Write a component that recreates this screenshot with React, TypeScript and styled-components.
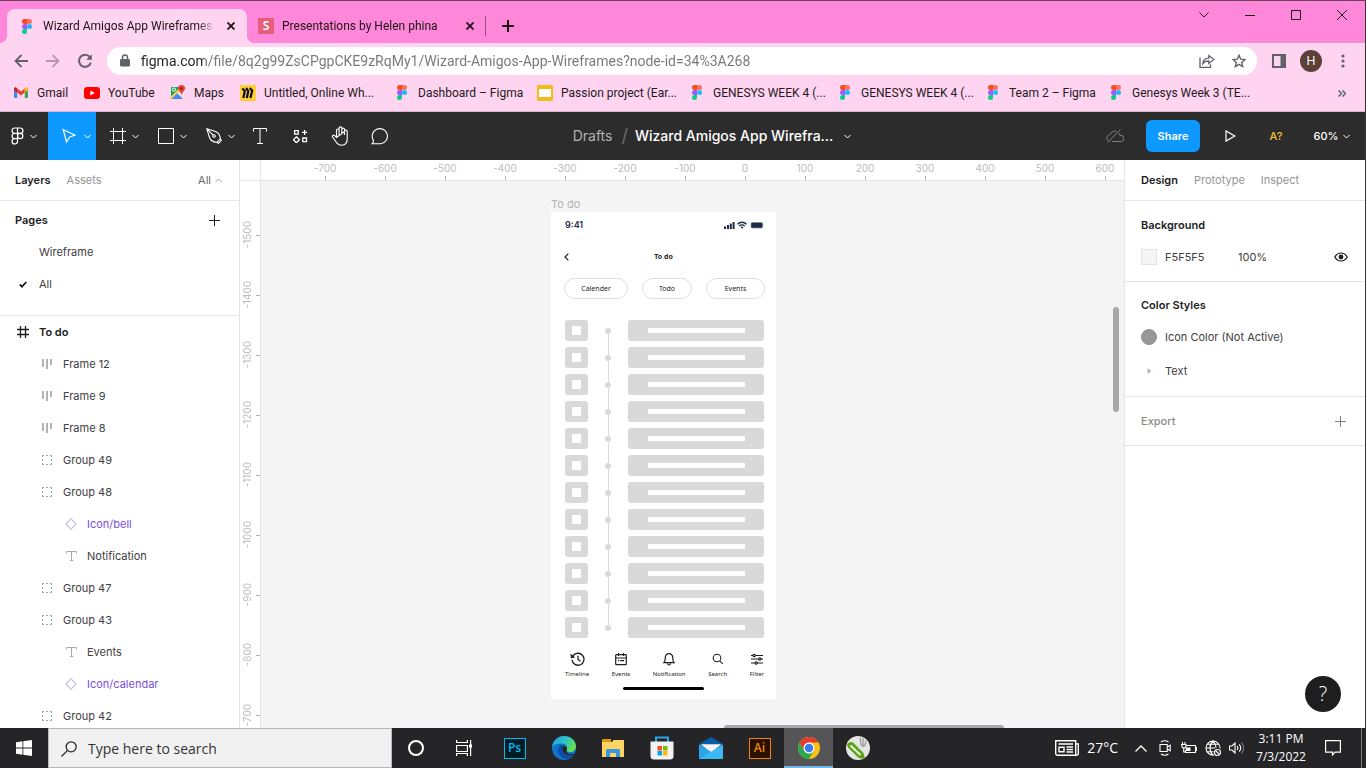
import React from "react";
import styled, { createGlobalStyle, css } from "styled-components";

const ui = `"Open Sans", "Noto Sans", sans-serif`;
const chrome = `Roboto, "Open Sans", sans-serif`;
const inter = `Inter, "Liberation Sans", sans-serif`;
const noto = `"Noto Sans", "Open Sans", sans-serif`;

const GlobalStyle = createGlobalStyle`
  *, *::before, *::after { box-sizing: border-box; }
  body { margin: 0; overflow: hidden; background: #fff; }
  button, input { font: inherit; color: inherit; border: 0; padding: 0; margin: 0; background: none; outline: none; }
  button { cursor: pointer; }
  a { color: inherit; text-decoration: none; }
  svg { display: block; flex: none; }
  h1, h2, ul { margin: 0; padding: 0; font-size: inherit; font-weight: inherit; list-style: none; }
`;

/* ---------- shared ---------- */

const Desktop = styled.div`
  display: flex;
  flex-direction: column;
  height: 100vh;
`;

const BrowserWindow = styled.div`
  flex: 1;
  min-height: 0;
  display: flex;
  flex-direction: column;
  border-top: 1px solid #6d4660;
  border-right: 1px solid #3a3034;
`;

const IconButton = styled.button<{ $w: number; $h?: number }>`
  flex: none;
  display: flex;
  align-items: center;
  justify-content: center;
  width: ${(p) => p.$w}px;
  height: ${(p) => p.$h ?? p.$w}px;
`;

type GlyphProps = {
  w: number;
  h?: number;
  box?: string;
  color?: string;
  sw?: number;
  children: React.ReactNode;
};

const Glyph = ({ w, h = w, box, color = "currentColor", sw = 1, children }: GlyphProps) => (
  <svg width={w} height={h} viewBox={box ?? `0 0 ${w} ${h}`} fill="none" stroke={color} strokeWidth={sw} aria-hidden="true">
    {children}
  </svg>
);

/* ---------- browser chrome ---------- */

const TabStrip = styled.div`
  flex: none;
  display: flex;
  align-items: flex-end;
  height: 42px;
  padding-left: 7px;
  background: #ff87d9;
  font: 12px/16px ${chrome};
  color: #1d1218;
`;

const Tab = styled.div<{ $active?: boolean }>`
  position: relative;
  display: flex;
  align-items: center;
  gap: 8px;
  width: 240px;
  height: 34px;
  padding: ${(p) => (p.$active ? "0 8px 0 12px" : "0 9px 0 11px")};
  ${(p) =>
    p.$active &&
    css`
      background: #ffd4f0;
      border-radius: 8px 8px 0 0;
      &::before,
      &::after {
        content: "";
        position: absolute;
        bottom: 0;
        width: 8px;
        height: 8px;
      }
      &::before {
        left: -8px;
        background: radial-gradient(circle at 0 0, transparent 8px, #ffd4f0 8px);
      }
      &::after {
        right: -8px;
        background: radial-gradient(circle at 100% 0, transparent 8px, #ffd4f0 8px);
      }
    `}
`;

const TabTitle = styled.button`
  flex: 1;
  min-width: 0;
  overflow: hidden;
  white-space: nowrap;
  text-align: left;
  mask-image: linear-gradient(90deg, #000 90%, transparent);
`;

const TabDivider = styled.span`
  width: 1px;
  height: 20px;
  margin: 0 6px 7px -2px;
  background: #9b4f83;
`;

const WindowControls = styled.div`
  display: flex;
  align-self: flex-start;
  margin-left: auto;
`;

const SiteBadge = styled.span`
  width: 16px;
  height: 16px;
  background: #e4607c;
  color: #fff;
  font: 600 12px/16px ${ui};
  text-align: center;
`;

const NavBar = styled.div`
  flex: none;
  display: flex;
  align-items: center;
  height: 36px;
  padding: 0 6px 0 5px;
  background: #ffd4f0;
  color: #5f6368;
`;

const Omnibox = styled.div`
  flex: 1;
  display: flex;
  align-items: center;
  height: 28px;
  margin: 0 6px;
  padding: 0 2px 0 12px;
  border-radius: 14px;
  background: #fff;
`;

const Address = styled.input`
  flex: 1;
  margin-left: 10px;
  height: 24px;
  font: 14px/20px ${chrome};
  color: transparent;
  background: linear-gradient(90deg, #202124 63px, #73767a 63px);
  background-clip: text;
  -webkit-background-clip: text;
`;

const Avatar = styled.span`
  width: 22px;
  height: 22px;
  border-radius: 50%;
  background: #5d4037;
  color: #fff;
  font: 12px/22px ${inter};
  text-align: center;
`;

const Bookmarks = styled.nav`
  flex: none;
  display: flex;
  align-items: center;
  height: 33px;
  padding-left: 13px;
  padding-bottom: 5px;
  border-bottom: 1px solid #d9b4cc;
  background: #ffd4f0;
  font: 12px/16px ${chrome};
  color: #241a20;
`;

const Bookmark = styled.a<{ $w: number }>`
  flex: none;
  display: flex;
  align-items: center;
  gap: 8px;
  width: ${(p) => p.$w}px;
  white-space: nowrap;
`;

const IconSlot = styled.span`
  flex: none;
  display: flex;
  justify-content: center;
  width: 16px;
`;

const FigmaMark = () => (
  <svg width="10" height="15" viewBox="0 0 10 15" aria-hidden="true">
    <path d="M5 0H2.5a2.5 2.5 0 0 0 0 5H5z" fill="#f24e1e" />
    <path d="M5 0h2.5a2.5 2.5 0 0 1 0 5H5z" fill="#ff7262" />
    <path d="M5 5H2.5a2.5 2.5 0 0 0 0 5H5z" fill="#a259ff" />
    <circle cx="7.5" cy="7.5" r="2.5" fill="#1abcfe" />
    <path d="M2.5 10H5v2.5A2.5 2.5 0 1 1 2.5 10z" fill="#0acf83" />
  </svg>
);

const GmailMark = () => (
  <svg width="14" height="11" viewBox="0 0 14 11" aria-hidden="true">
    <path d="M0 2v8a1 1 0 0 0 1 1h2.2V4.4z" fill="#4285f4" />
    <path d="M14 2v8a1 1 0 0 1-1 1h-2.2V4.4z" fill="#34a853" />
    <path d="M3.2 1.4 7 4.2l3.8-2.8v4.2L7 8.4 3.2 5.6z" fill="#ea4335" />
    <path d="M0 1.8C0 .2 1.6-.4 2.8.9l.4.5v4.2L0 3.2z" fill="#c5221f" />
    <path d="M14 1.8C14 .2 12.4-.4 11.2.9l-.4.5v4.2L14 3.2z" fill="#fbbc04" />
  </svg>
);

const YouTubeMark = () => (
  <svg width="16" height="12" viewBox="0 0 16 12" aria-hidden="true">
    <rect width="16" height="12" rx="3" fill="#f00" />
    <path d="M6.3 3.4v5.2L10.8 6z" fill="#fff" />
  </svg>
);

const MapsMark = () => (
  <svg width="16" height="16" viewBox="0 0 16 16" aria-hidden="true">
    <path d="M1 2h12v12H1z" fill="#1ea362" />
    <path d="M1 14 7 8l6 6z" fill="#4a89f3" />
    <path d="M13 2v12L7 8z" fill="#e6e7e8" />
    <path d="M1 13 12 2" stroke="#ffd04b" strokeWidth="2" />
    <circle cx="4" cy="4.6" r="1.6" stroke="#fff" fill="none" />
    <path d="M11.5 0a3.5 3.5 0 0 0-3.5 3.6C8 6 11 7 11.5 10.500 12 7 15 6 15 3.600A3.500 3.500 0 0 0 11.500 0z" fill="#ea4335" />
    <circle cx="11.500" cy="3.500" r="1.200" fill="#7a1d14" />
  </svg>
);

const MiroMark = () => (
  <svg width="16" height="16" viewBox="0 0 16 16" aria-hidden="true">
    <rect width="16" height="16" rx="1" fill="#ffd02f" />
    <path d="M2.300 3.500 4.800 6 3.300 13M6 3l2.300 3-1.500 7M9.700 3l2.500 2.500-1.800 7.500" fill="none" stroke="#0b0a2c" strokeWidth="2.200" />
  </svg>
);

const SlidesMark = () => (
  <svg width="16" height="16" viewBox="0 0 16 16" aria-hidden="true">
    <rect width="16" height="16" rx="1.500" fill="#f5ba15" />
    <rect x="2" y="4" width="12" height="8" fill="#fff" />
  </svg>
);

const bookmarks: { label: string; w: number; mark: React.ReactNode }[] = [
  { label: "Gmail", w: 71, mark: <GmailMark /> },
  { label: "YouTube", w: 86, mark: <YouTubeMark /> },
  { label: "Maps", w: 70, mark: <MapsMark /> },
  { label: "Untitled, Online Wh...", w: 154, mark: <MiroMark /> },
  { label: "Dashboard – Figma", w: 143, mark: <FigmaMark /> },
  { label: "Passion project (Ear...", w: 152, mark: <SlidesMark /> },
  { label: "GENESYS WEEK 4 (...", w: 148, mark: <FigmaMark /> },
  { label: "GENESYS WEEK 4 (...", w: 148, mark: <FigmaMark /> },
  { label: "Team 2 – Figma", w: 123, mark: <FigmaMark /> },
  { label: "Genesys Week 3 (TE...", w: 140, mark: <FigmaMark /> },
];

const CloseX = () => (
  <Glyph w={8} sw={1.8} color="#1d1218">
    <path d="M.5.5l7 7M7.500.5l-7 7" />
  </Glyph>
);

const BrowserChrome = () => (
  <>
    <TabStrip>
      <Tab $active>
        <IconSlot><FigmaMark /></IconSlot>
        <TabTitle>Wizard Amigos App Wireframes -</TabTitle>
        <IconButton $w={16} aria-label="Close tab"><CloseX /></IconButton>
      </Tab>
      <Tab>
        <SiteBadge>S</SiteBadge>
        <TabTitle>Presentations by Helen phina</TabTitle>
        <IconButton $w={16} aria-label="Close tab"><CloseX /></IconButton>
      </Tab>
      <TabDivider />
      <IconButton $w={32} $h={34} aria-label="New tab">
        <Glyph w={12} sw={2} color="#1d1218"><path d="M6 0v12M0 6h12" /></Glyph>
      </IconButton>
      <WindowControls>
        <IconButton $w={46} $h={28} aria-label="Search tabs"><Glyph w={10} h={6}><path d="M.5.5 5 5 9.500.5" /></Glyph></IconButton>
        <IconButton $w={46} $h={28} aria-label="Minimize"><Glyph w={10}><path d="M0 5.500h10" /></Glyph></IconButton>
        <IconButton $w={46} $h={28} aria-label="Maximize"><Glyph w={10}><path d="M.5.5h9v9h-9z" /></Glyph></IconButton>
        <IconButton $w={46} $h={28} aria-label="Close window"><Glyph w={10}><path d="M0 0l10 10M10 0 0 10" /></Glyph></IconButton>
      </WindowControls>
    </TabStrip>
    <NavBar>
      <IconButton $w={32} aria-label="Back"><Glyph w={14} sw={1.8}><path d="M14 7H1.500M7.500 1l-6 6 6 6" /></Glyph></IconButton>
      <IconButton $w={32} aria-label="Forward"><Glyph w={14} sw={1.8} color="#b998ad"><path d="M0 7h12.500M6.500 1l6 6-6 6" /></Glyph></IconButton>
      <IconButton $w={32} aria-label="Reload">
        <Glyph w={14} sw={2}><path d="M12 3.400A6 6 0 1 0 12.800 8.600" /><path d="M13.800.2v5.600H8.200z" fill="currentColor" stroke="none" /></Glyph>
      </IconButton>
      <Omnibox>
        <Glyph w={12} h={14}><path d="M2 5.500h8a.5.5 0 0 1 .5.5v5.500a.5.5 0 0 1-.5.5H2a.5.5 0 0 1-.5-.5V6a.5.5 0 0 1 .5-.5z" fill="currentColor" /><path d="M3.500 5.500V3.400a2.500 2.500 0 0 1 5 0v2.100" strokeWidth="1.500" /></Glyph>
        <Address aria-label="Address" defaultValue="figma.com/file/8q2g99ZsCPgpCKE9zRqMy1/Wizard-Amigos-App-Wireframes?node-id=34%3A268" />
        <IconButton $w={32} $h={28} aria-label="Share this page">
          <Glyph w={16} h={14} sw={1.3}><path d="M1 3.500v9.800h10.500v-3" /><path d="M3.800 9.500c.4-3.500 2.600-5.200 6-5.300V1.500l5 4-5 4V7c-2.600 0-4.600.6-6 2.500z" /></Glyph>
        </IconButton>
        <IconButton $w={32} $h={28} aria-label="Bookmark this page">
          <Glyph w={14} sw={1.4}><path d="M7 1.300l1.700 3.900 4.200.4-3.200 2.800.95 4.100L7 10.300l-3.650 2.200.95-4.100L1.100 5.600l4.200-.4z" /></Glyph>
        </IconButton>
      </Omnibox>
      <IconButton $w={32} aria-label="Side panel"><Glyph w={14} sw={2}><path d="M1 1h12v12H1z" /><path d="M9.500 1H13v12H9.500z" fill="currentColor" /></Glyph></IconButton>
      <IconButton $w={32} aria-label="Profile"><Avatar>H</Avatar></IconButton>
      <IconButton $w={32} aria-label="Browser menu"><Glyph w={4} h={14}><g fill="currentColor" stroke="none"><circle cx="2" cy="2" r="1.600" /><circle cx="2" cy="7" r="1.600" /><circle cx="2" cy="12" r="1.600" /></g></Glyph></IconButton>
    </NavBar>
    <Bookmarks>
      {bookmarks.map((b, i) => (
        <Bookmark key={i} href="#" $w={b.w}><IconSlot>{b.mark}</IconSlot>{b.label}</Bookmark>
      ))}
      <WindowControls as="span">
        <IconButton $w={46} $h={28} aria-label="More bookmarks"><Glyph w={8} h={7} sw={1.500} color="#5f6368"><path d="M.5.5l3 3-3 3M4.500.5l3 3-3 3" /></Glyph></IconButton>
      </WindowControls>
    </Bookmarks>
  </>
);

/* ---------- editor toolbar ---------- */

const ToolBar = styled.header`
  flex: none;
  display: flex;
  align-items: center;
  height: 48px;
  background: #2c2c2c;
  color: #fff;
  font: 11px/16px ${inter};
`;

const Tool = styled.button<{ $active?: boolean; $plain?: boolean; $shift?: boolean }>`
  flex: none;
  display: flex;
  align-items: center;
  justify-content: center;
  gap: ${(p) => (p.$active ? 8 : 6)}px;
  width: ${(p) => (p.$plain ? 40 : 48)}px;
  height: 48px;
  padding-left: ${(p) => (p.$shift ? 8 : 0)}px;
  background: ${(p) => (p.$active ? "#0d99ff" : "transparent")};
`;

const FileTitle = styled.div`
  flex: 1;
  display: flex;
  align-items: center;
  justify-content: center;
  padding-right: 74px;
  font-size: 14px;
  white-space: nowrap;
`;

const Muted = styled.span`
  color: #b3b3b3;
`;

const Slash = styled.span`
  padding: 0 7px 0 9px;
  font-size: 18px;
  color: #6e6e6e;
`;

const FileName = styled.h1`
  font-weight: 500;
  margin-right: 10px;
`;

const ShareButton = styled.button`
  width: 54px;
  height: 32px;
  margin: 0 7px 0 15px;
  border-radius: 6px;
  background: #0d99ff;
  font-weight: 600;
`;

const ToolText = styled.button<{ $color?: string; $w: number }>`
  display: flex;
  align-items: center;
  justify-content: center;
  gap: 5px;
  width: ${(p) => p.$w}px;
  height: 48px;
  color: ${(p) => p.$color ?? "#fff"};
  font-weight: 500;
`;

const Caret = ({ up = false, color = "currentColor" }: { up?: boolean; color?: string }) => (
  <Glyph w={7} h={5} color={color}><path d={up ? "M.5 4l3-3 3 3" : "M.5 1l3 3 3-3"} /></Glyph>
);

const EditorToolbar = () => (
  <ToolBar>
    <Tool aria-label="Main menu">
      <Glyph w={13} h={18} sw={1.2}><path d="M6.500 1H3.700a2.600 2.600 0 0 0 0 5.300h2.800zM6.500 1h2.800a2.600 2.600 0 0 1 0 5.300H6.500zM6.500 6.300H3.700a2.600 2.600 0 0 0 0 5.300h2.800zM3.700 11.600h2.800v2.700a2.700 2.700 0 1 1-2.800-2.700z" /><circle cx="9.200" cy="8.950" r="2.650" /></Glyph>
      <Caret />
    </Tool>
    <Tool $active $shift aria-label="Move"><Glyph w={14} h={16} sw={1.2}><path d="M1.200 1.500 4.500 14l3.100-5 5.400-1.700z" /></Glyph><Caret /></Tool>
    <Tool $shift aria-label="Frame"><Glyph w={16}><path d="M3.500 0v16M12.500 0v16M0 3.500h16M0 12.500h16" /></Glyph><Caret /></Tool>
    <Tool $shift aria-label="Rectangle"><Glyph w={16}><path d="M.5.5h15v15H.5z" /></Glyph><Caret /></Tool>
    <Tool $shift aria-label="Pen">
      <Glyph w={16} sw={1.1}><path d="M.8.8l8.700 2.700c3 1 4.500 3.500 5 7.500l.8 1.500-2.800 2.800-1.500-.8c-4-.5-6.500-2-7.500-5zM.8.8l6.400 6.400M11 14.200l3.500-3.400" /><circle cx="8" cy="8" r="1.300" /></Glyph>
      <Caret />
    </Tool>
    <Tool $plain aria-label="Text"><Glyph w={14} h={16}><path d="M.5 3.500V.5h13v3M7 .5v15M4 15.500h6" /></Glyph></Tool>
    <Tool $plain aria-label="Resources"><Glyph w={15} h={14} sw={1.3}><path d="M1.600 1.600h3.600v3.600H1.600zM11.600.9v5M9.100 3.400h5M9.800 9h3.700v3.700H9.800zM3.400 7.800l3 3-3 3-3-3z" /></Glyph></Tool>
    <Tool $plain aria-label="Hand">
      <Glyph w={18} h={20} sw={1.1}><path d="M5.500 10.500V4.300a1.300 1.300 0 0 1 2.600 0V9M8.100 8.500V2.200a1.300 1.300 0 0 1 2.700 0v6.300M10.800 3.500a1.300 1.300 0 0 1 2.700 0V9M13.500 5.500a1.300 1.300 0 0 1 2.700 0V13c0 4-2.200 6.200-5.600 6.200-2.600 0-4.200-1-5.500-3.200L1.500 11c-.7-1.200 1-2.500 2.200-1.400l1.800 1.900z" /></Glyph>
    </Tool>
    <Tool $plain aria-label="Comment"><Glyph w={18} h={17} sw={1.1}><path d="M1 15.800c1-.9 1.500-2 1.500-3.300A7.600 7.600 0 1 1 9.700 15.800z" /></Glyph></Tool>
    <FileTitle>
      <Muted>Drafts</Muted>
      <Slash>/</Slash>
      <FileName>Wizard Amigos App Wirefra...</FileName>
      <IconButton $w={9} $h={24} aria-label="File options"><Caret /></IconButton>
    </FileTitle>
    <IconButton $w={32} aria-label="Offline status">
      <Glyph w={18} h={14} color="#808080"><path d="M10.500 2.300A5 5 0 0 0 4.200 5.500 3.500 3.500 0 0 0 2 11.500M13 4l1 2.500a3 3 0 0 1 1.500 6H5.500M14.500.5l-13 13" /></Glyph>
    </IconButton>
    <ShareButton>Share</ShareButton>
    <IconButton $w={46} $h={48} aria-label="Present"><Glyph w={11} h={12} sw={1.2}><path d="M1 .9v10.200L9.800 6z" /></Glyph></IconButton>
    <ToolText $w={46} $color="#f2c530">A?</ToolText>
    <ToolText $w={66}>60% <Caret /></ToolText>
  </ToolBar>
);

/* ---------- workspace ---------- */

const Workspace = styled.main`
  flex: 1;
  min-height: 0;
  display: flex;
  font: 11px/16px ${inter};
  color: #404040;
`;

const LeftPanel = styled.aside`
  flex: none;
  width: 240px;
  overflow: hidden;
  border-right: 1px solid #e5e5e5;
  background: #fff;
`;

const PanelTabs = styled.div`
  display: flex;
  align-items: center;
  gap: 16px;
  height: 41px;
  padding: 0 17px 0 15px;
  border-bottom: 1px solid #e5e5e5;
`;

const PanelTab = styled.button<{ $active?: boolean }>`
  display: flex;
  align-items: center;
  gap: 4px;
  color: ${(p) => (p.$active ? "#1e1e1e" : "#949494")};
  font-weight: ${(p) => (p.$active ? 600 : 400)};
`;

const FilterTab = styled(PanelTab)`
  margin-left: auto;
  color: #666;
`;

const PagesSection = styled.section`
  padding: 3px 0 15px;
  border-bottom: 1px solid #e5e5e5;
`;

const PanelHeader = styled.div<{ $muted?: boolean }>`
  display: flex;
  align-items: center;
  justify-content: space-between;
  height: 32px;
  padding: 0 17px 0 15px;
  color: ${(p) => (p.$muted ? "#8c8c8c" : "#1e1e1e")};
  font-weight: ${(p) => (p.$muted ? 500 : 600)};
`;

const Row = styled.button<{ $depth: number; $kind?: string }>`
  display: flex;
  align-items: center;
  gap: 10px;
  width: 100%;
  height: 32px;
  padding-left: ${(p) => 17 + p.$depth * 24}px;
  text-align: left;
  color: ${(p) => (p.$kind === "component" ? "#7b4fe0" : p.$kind === "frame" ? "#1e1e1e" : "inherit")};
  font-weight: ${(p) => (p.$kind === "frame" ? 600 : 400)};
`;

const RowIcon = styled.span`
  flex: none;
  display: flex;
  justify-content: center;
  width: 12px;
`;

type Kind = "frame" | "auto" | "group" | "component" | "text";

const kindIcons: Record<Kind, React.ReactNode> = {
  frame: <Glyph w={12} sw={1.3} color="#1e1e1e"><path d="M3.500 0v12M8.500 0v12M0 3.500h12M0 8.500h12" /></Glyph>,
  auto: <Glyph w={10} sw={2} color="#b3b3b3"><path d="M1 0v8M5 0v10M9 0v6" /></Glyph>,
  group: <Glyph w={10} color="#a0a0a0"><path d="M.5 2V.5H2M4 .5h2M8 .5h1.500V2M9.500 4v2M9.500 8v1.500H8M6 9.500H4M2 9.500H.5V8M.5 6V4" /></Glyph>,
  component: <Glyph w={12} sw={1.2} color="#cdbfe6"><path d="M6 .8 11.200 6 6 11.200.8 6z" /></Glyph>,
  text: <Glyph w={11} h={10} color="#a8a8a8"><path d="M.5 2.500v-2h10v2M5.500.5v9M4 9.500h3" /></Glyph>,
};

const layers: { name: string; kind: Kind; depth: number }[] = [
  { name: "To do", kind: "frame", depth: 0 },
  { name: "Frame 12", kind: "auto", depth: 1 },
  { name: "Frame 9", kind: "auto", depth: 1 },
  { name: "Frame 8", kind: "auto", depth: 1 },
  { name: "Group 49", kind: "group", depth: 1 },
  { name: "Group 48", kind: "group", depth: 1 },
  { name: "Icon/bell", kind: "component", depth: 2 },
  { name: "Notification", kind: "text", depth: 2 },
  { name: "Group 47", kind: "group", depth: 1 },
  { name: "Group 43", kind: "group", depth: 1 },
  { name: "Events", kind: "text", depth: 2 },
  { name: "Icon/calendar", kind: "component", depth: 2 },
  { name: "Group 42", kind: "group", depth: 1 },
];

const Plus = ({ color = "#1e1e1e" }: { color?: string }) => (
  <Glyph w={11} color={color}><path d="M5.500 0v11M0 5.500h11" /></Glyph>
);

const LayersPanel = () => (
  <LeftPanel>
    <PanelTabs>
      <PanelTab $active>Layers</PanelTab>
      <PanelTab>Assets</PanelTab>
      <FilterTab>All <Caret up color="#999" /></FilterTab>
    </PanelTabs>
    <PagesSection>
      <PanelHeader>
        <h2>Pages</h2>
        <IconButton $w={16} aria-label="Add page"><Plus /></IconButton>
      </PanelHeader>
      <Row $depth={0}><RowIcon />Wireframe</Row>
      <Row $depth={0}>
        <RowIcon><Glyph w={8} h={7} sw={1.800} color="#1e1e1e"><path d="M.8 3.500 3 5.600 7.300 1" /></Glyph></RowIcon>
        All
      </Row>
    </PagesSection>
    <ul>
      {layers.map((l) => (
        <li key={l.name}>
          <Row $depth={l.depth} $kind={l.kind}><RowIcon>{kindIcons[l.kind]}</RowIcon>{l.name}</Row>
        </li>
      ))}
    </ul>
  </LeftPanel>
);

const Stage = styled.section`
  flex: 1;
  min-width: 0;
  display: grid;
  grid-template: 21px 1fr / 21px 1fr;
  overflow: hidden;
  background: #fff;
`;

const Corner = styled.div`
  border-right: 1px solid #e5e5e5;
  border-bottom: 1px solid #e5e5e5;
`;

const RulerX = styled.div`
  display: flex;
  overflow: hidden;
  padding-left: 34px;
  border-bottom: 1px solid #e5e5e5;
  font-size: 10px;
  color: #bcbcbc;
`;

const RulerY = styled.div`
  display: flex;
  flex-direction: column;
  overflow: hidden;
  padding-top: 24px;
  border-right: 1px solid #e5e5e5;
  font-size: 10px;
  color: #bcbcbc;
`;

const MarkX = styled.span`
  flex: none;
  width: 60px;
  text-align: center;
  background: linear-gradient(#b3b3b3, #b3b3b3) 30px 16px / 1px 4px no-repeat;
`;

const MarkY = styled.span`
  flex: none;
  height: 60px;
  width: 20px;
  display: flex;
  justify-content: center;
  align-items: center;
  padding-right: 6px;
  background: linear-gradient(#b3b3b3, #b3b3b3) 16px 30px / 4px 1px no-repeat;
  span {
    writing-mode: vertical-rl;
    transform: rotate(180deg);
  }
`;

const Board = styled.div`
  position: relative;
  overflow: hidden;
  background: #f4f4f4;
`;

const ScrollThumb = styled.span<{ $axis: "x" | "y" }>`
  position: absolute;
  border-radius: 3px;
  background: #a8a8a8;
  ${(p) =>
    p.$axis === "y"
      ? css`right: 5px; top: 126px; width: 6px; height: 105px;`
      : css`right: 120px; bottom: -3px; width: 280px; height: 6px;`}
`;

const Artboard = styled.div`
  position: absolute;
  left: 290px;
  top: 15px;
  width: 225px;
`;

const ArtboardName = styled.div`
  height: 16px;
  color: #b3b3b3;
`;

const Phone = styled.div`
  display: flex;
  flex-direction: column;
  height: 487px;
  background: #fff;
  font: 7px/12px ${noto};
  color: #1e1e1e;
`;

const StatusBar = styled.div`
  display: flex;
  align-items: center;
  justify-content: space-between;
  height: 25px;
  padding: 0 11px 0 14px;
  font: 600 9px/12px ${inter};
  color: #1c2b46;
`;

const PhoneHeader = styled.div`
  display: grid;
  grid-template-columns: 1fr auto 1fr;
  align-items: center;
  height: 39px;
  padding: 0 13px;
  font-weight: 700;
`;

const Pills = styled.div`
  display: flex;
  justify-content: space-between;
  padding: 2px 11px 0 13px;
`;

const Pill = styled.button<{ $w: number }>`
  width: ${(p) => p.$w}px;
  height: 21px;
  border: 1px solid #dedede;
  border-radius: 11px;
`;

const TodoList = styled.ul`
  display: flex;
  flex-direction: column;
  gap: 6px;
  padding: 21px 12px 0 14px;
`;

const TodoItem = styled.li`
  position: relative;
  display: grid;
  grid-template-columns: 23px 40px 1fr;
  align-items: center;
  height: 21px;
  &:not(:last-child)::after {
    content: "";
    position: absolute;
    left: 43px;
    top: 11px;
    width: 1px;
    height: 27px;
    background: #dcdcdc;
  }
`;

const Block = styled.span`
  display: flex;
  align-items: center;
  justify-content: center;
  height: 21px;
  border-radius: 3px;
  background: #d9d9d9;
`;

const Cutout = styled.span<{ $w: number; $h: number }>`
  width: ${(p) => p.$w}px;
  height: ${(p) => p.$h}px;
  background: #fff;
`;

const Dot = styled.span`
  justify-self: center;
  width: 6px;
  height: 6px;
  border-radius: 50%;
  background: #d9d9d9;
`;

const PhoneNav = styled.nav`
  display: flex;
  justify-content: space-between;
  padding: 14px 12px 0 14px;
`;

const PhoneNavItem = styled.button`
  display: flex;
  flex-direction: column;
  align-items: center;
  gap: 2px;
  font-size: 6px;
  line-height: 12px;
`;

const HomeBar = styled.span`
  align-self: center;
  width: 81px;
  height: 3px;
  margin-top: 7px;
  border-radius: 2px;
  background: #000;
`;

const navItems: { label: string; icon: React.ReactNode }[] = [
  { label: "Timeline", icon: <Glyph w={15} h={14} sw={1.3}><path d="M2.800 4.200A6 6 0 1 1 2 7.800M8 3.700V7.500l2.600 1.700" /><path d="M.3 1.500 1 6.200l4.300-.8z" fill="currentColor" stroke="none" /></Glyph> },
  { label: "Events", icon: <Glyph w={12} h={14} sw={1.2}><path d="M1.500 2.600h9a.8.8 0 0 1 .8.8v8.500a.8.8 0 0 1-.8.8h-9a.8.8 0 0 1-.8-.8V3.400a.8.8 0 0 1 .8-.8zM.7 6h10.600M3.500 1v3M8.500 1v3M3 8.700h1.200M5.200 8.700H9" /></Glyph> },
  { label: "Notification", icon: <Glyph w={12} h={14} sw={1.2}><path d="M.8 10.700h10.400c-1.200-1.200-1.500-2.200-1.500-5A3.700 3.700 0 0 0 6 1.700a3.700 3.700 0 0 0-3.700 4c0 2.800-.3 3.800-1.500 5zM4.500 11.500c.2 2 2.800 2 3 0" /></Glyph> },
  { label: "Search", icon: <Glyph w={12} h={14} sw={1.1}><circle cx="5" cy="6" r="3.800" /><path d="M7.800 8.800l3 3" /></Glyph> },
  { label: "Filter", icon: <Glyph w={12} h={14} sw={1.2}><path d="M0 3.500h2M4.500 3.500H12M0 7h7.500M10 7h2M0 11h4M6.500 11H12" /><circle cx="3.200" cy="3.500" r="1.200" /><circle cx="8.800" cy="7" r="1.200" /><circle cx="5.300" cy="11" r="1.200" /></Glyph> },
];

const Canvas = () => (
  <Stage>
    <Corner />
    <RulerX>
      {[-700, -600, -500, -400, -300, -200, -100, 0, 100, 200, 300, 400, 500, 600].map((n) => (
        <MarkX key={n}>{n}</MarkX>
      ))}
    </RulerX>
    <RulerY>
      {[-1500, -1400, -1300, -1200, -1100, -1000, -900, -800, -700].map((n) => (
        <MarkY key={n}><span>{n}</span></MarkY>
      ))}
    </RulerY>
    <Board>
      <Artboard>
        <ArtboardName>To do</ArtboardName>
        <Phone>
          <StatusBar>
            9:41
            <svg width="41" height="8" viewBox="0 0 41 8" fill="#1c2b46" aria-hidden="true">
              <path d="M0 5.500h2V8H0zM3 4h2v4H3zM5.800 2.500h2V8h-2zM8.600 1h2v7h-2z" />
              <path d="M13.500 3.300a6 6 0 0 1 9 0M15.300 5a3.700 3.700 0 0 1 5.400 0" fill="none" stroke="#1c2b46" strokeWidth="1.300" />
              <path d="M16.600 6.200a2 2 0 0 1 2.800 0L18 7.800z" />
              <rect x="26.500" y="1" width="12.500" height="6.500" rx="1.800" fill="#a4aab5" />
              <rect x="27.300" y="1.800" width="11" height="5" rx="1" />
              <path d="M39.600 3.200v2.200c.8-.4.800-1.800 0-2.200z" fill="#a4aab5" />
            </svg>
          </StatusBar>
          <PhoneHeader>
            <IconButton $w={5} $h={12} aria-label="Back"><Glyph w={5} h={8} sw={1.2}><path d="M4.300.6 1 4l3.300 3.400" /></Glyph></IconButton>
            <span>To do</span>
            <span />
          </PhoneHeader>
          <Pills>
            <Pill $w={64}>Calender</Pill>
            <Pill $w={50}>Todo</Pill>
            <Pill $w={59}>Events</Pill>
          </Pills>
          <TodoList>
            {Array.from({ length: 12 }, (_, i) => (
              <TodoItem key={i}>
                <Block><Cutout $w={9} $h={9} /></Block>
                <Dot />
                <Block><Cutout $w={97} $h={5} /></Block>
              </TodoItem>
            ))}
          </TodoList>
          <PhoneNav>
            {navItems.map((n) => (
              <PhoneNavItem key={n.label}>{n.icon}{n.label}</PhoneNavItem>
            ))}
          </PhoneNav>
          <HomeBar />
        </Phone>
      </Artboard>
      <ScrollThumb $axis="y" />
      <ScrollThumb $axis="x" />
    </Board>
  </Stage>
);

const RightPanel = styled.aside`
  position: relative;
  flex: none;
  width: 241px;
  border-left: 1px solid #e5e5e5;
  background: #fff;
  ${PanelTabs}, ${PanelHeader} {
    padding-left: 16px;
  }
`;

const PropSection = styled.section<{ $pad?: string }>`
  padding: ${(p) => p.$pad ?? "8px 0"};
  border-bottom: 1px solid #e5e5e5;
`;

const PropRow = styled.div`
  display: flex;
  align-items: center;
  gap: 8px;
  height: 32px;
  padding: 0 16px;
  & + & {
    margin-top: 2px;
  }
`;

const Swatch = styled.span<{ $round?: boolean }>`
  width: 16px;
  height: 16px;
  border: 1px solid ${(p) => (p.$round ? "#8f8f8f" : "#e2e2e2")};
  border-radius: ${(p) => (p.$round ? "50%" : "0")};
  background: ${(p) => (p.$round ? "#979797" : "#f5f5f5")};
`;

const Field = styled.input<{ $w: number }>`
  width: ${(p) => p.$w}px;
`;

const EndButton = styled(IconButton)`
  margin-left: auto;
`;

const HelpButton = styled.button`
  position: absolute;
  right: 24px;
  bottom: 16px;
  width: 36px;
  height: 36px;
  border-radius: 50%;
  background: #1e1e1e;
  color: #fff;
  font: 300 20px/36px ${ui};
`;

const DesignPanel = () => (
  <RightPanel>
    <PanelTabs>
      <PanelTab $active>Design</PanelTab>
      <PanelTab>Prototype</PanelTab>
      <PanelTab>Inspect</PanelTab>
    </PanelTabs>
    <PropSection>
      <PanelHeader><h2>Background</h2></PanelHeader>
      <PropRow>
        <Swatch />
        <Field $w={65} aria-label="Background color" defaultValue="F5F5F5" />
        <Field $w={40} aria-label="Background opacity" defaultValue="100%" />
        <EndButton $w={16} aria-label="Toggle visibility">
          <Glyph w={14} h={10} sw={1.2} color="#1e1e1e"><path d="M.8 5C2.300 2.300 4.400 1 7 1s4.700 1.300 6.200 4C11.700 7.700 9.600 9 7 9S2.300 7.700.8 5z" /><circle cx="7" cy="5" r="1.800" fill="#1e1e1e" /></Glyph>
        </EndButton>
      </PropRow>
    </PropSection>
    <PropSection $pad="7px 0 9px">
      <PanelHeader><h2>Color Styles</h2></PanelHeader>
      <PropRow><Swatch $round />Icon Color (Not Active)</PropRow>
      <PropRow as="button">
        <IconSlot><svg width="5" height="6" viewBox="0 0 5 6" aria-hidden="true"><path d="M.5 0v6l4-3z" fill="#b3b3b3" /></svg></IconSlot>
        Text
      </PropRow>
    </PropSection>
    <PropSection>
      <PanelHeader $muted>
        <h2>Export</h2>
        <IconButton $w={16} aria-label="Add export"><Plus color="#808080" /></IconButton>
      </PanelHeader>
    </PropSection>
    <HelpButton aria-label="Help">?</HelpButton>
  </RightPanel>
);

/* ---------- taskbar ---------- */

const Bar = styled.footer`
  flex: none;
  display: flex;
  height: 40px;
  background: #252527;
  color: #fff;
  font: 12px/18px ${ui};
`;

const SearchBox = styled.label`
  display: flex;
  align-items: center;
  gap: 11px;
  width: 344px;
  padding: 1px 12px 0;
  border: 1px solid #b9b9b9;
  background: #f1f1f1;
  color: #2a2a2a;
  input {
    flex: 1;
    font-size: 14px;
  }
  input::placeholder {
    color: #333;
    opacity: 1;
  }
`;

const Apps = styled.div`
  display: flex;
  margin-left: 2px;
`;

const AppButton = styled(IconButton)<{ $active?: boolean }>`
  background: ${(p) => (p.$active ? "#555557" : "transparent")};
  box-shadow: ${(p) => (p.$active ? "inset 0 -2px #76b9ed" : "none")};
`;

const Tray = styled.div`
  display: flex;
  margin-left: auto;
`;

const Weather = styled.button`
  display: flex;
  align-items: center;
  gap: 8px;
  margin-right: 11px;
  font-size: 14px;
`;

const Clock = styled.button`
  width: 64px;
  text-align: center;
`;

const ShowDesktop = styled.span`
  width: 5px;
  border-left: 1px solid #777;
  margin-left: 8px;
`;

const Adobe = styled.span<{ $line: string; $bg: string }>`
  width: 22px;
  height: 21px;
  border: 1px solid ${(p) => p.$line};
  background: ${(p) => p.$bg};
  color: ${(p) => p.$line};
  font: 600 12px/18px ${ui};
  text-align: center;
`;

const apps: { name: string; active?: boolean; icon: React.ReactNode }[] = [
  { name: "Photoshop", icon: <Adobe $line="#00b8f0" $bg="#001d26">Ps</Adobe> },
  {
    name: "Edge",
    icon: (
      <svg width="24" height="24" viewBox="0 0 24 24" aria-hidden="true">
        <defs>
          <linearGradient id="edgeTop" x1="0" y1="0" x2="1" y2=".5"><stop offset="0" stopColor="#1f9de0" /><stop offset=".6" stopColor="#2fc6c0" /><stop offset="1" stopColor="#66e04e" /></linearGradient>
        </defs>
        <circle cx="12" cy="12" r="12" fill="#1273cc" />
        <path d="M0 11C.8 4.500 6 0 12 0c7 0 12 5 12 10.500 0 3.500-2.800 5.500-5.800 5.500-2.700 0-4.200-1-3.600-2 1.800-3-.6-6.500-5-6.500C5 7.500 1.200 9 0 11z" fill="url(#edgeTop)" />
        <path d="M9 9c-3.500 2-4 7-1 10.500S16 23.500 19 21.800c1.600-.9 2.800-2.300 3.300-3.300-3 1.500-7.500 1.500-10-.8C9.600 15.300 9.300 12 11 9.800z" fill="#0c4da2" />
        <path d="M11 10c-1.400 2.500-.8 5.600 1.500 7.500 2.500 2 6.500 2.300 9.800.9.500-.2.300-.9-.3-.7-2.500.8-7 .5-7.500-2-.2-.9.500-1.200.5-2.700 0-2.500-3-4-4-3z" fill="#252527" />
      </svg>
    ),
  },
  {
    name: "File Explorer",
    icon: (
      <svg width="22" height="18" viewBox="0 0 22 18" aria-hidden="true">
        <path d="M0 1a1 1 0 0 1 1-1h8v4H0z" fill="#e09b12" />
        <path d="M0 3h10l1.500-2H22v17H0z" fill="#ffd465" />
        <path d="M4 18v-6.500a1.500 1.500 0 0 1 1.500-1.500h11a1.500 1.500 0 0 1 1.500 1.500V18h-4v-4H8v4z" fill="#3a96dd" />
      </svg>
    ),
  },
  {
    name: "Microsoft Store",
    icon: (
      <svg width="24" height="24" viewBox="0 0 24 24" aria-hidden="true">
        <path d="M6 6V1.500h12V6" fill="none" stroke="#29a9e8" strokeWidth="2" />
        <path d="M.5 5.500h23V20a3.500 3.500 0 0 1-3.500 3.500H4A3.500 3.500 0 0 1 .5 20z" fill="#f2f2f2" />
        <path d="M7.500 10H12v4.500H7.500z" fill="#f25022" /><path d="M13 10h4.500v4.500H13z" fill="#7fba00" />
        <path d="M7.500 15H12v4.500H7.500z" fill="#00a4ef" /><path d="M13 15h4.500v4.500H13z" fill="#ffb900" />
      </svg>
    ),
  },
  {
    name: "Mail",
    icon: (
      <svg width="24" height="22" viewBox="0 0 24 22" aria-hidden="true">
        <path d="M0 7 12 0l12 7v3H0z" fill="#0b5aa8" />
        <path d="M2 7.500h20L12 16z" fill="#f3f3f3" />
        <path d="M0 7.500 24 22H0z" fill="#2aa4ea" /><path d="M24 7.500V22L0 22z" fill="#3cb9f5" />
        <path d="M2 7.500h20l-10 6.800z" fill="#f3f3f3" />
      </svg>
    ),
  },
  { name: "Illustrator", icon: <Adobe $line="#f5820b" $bg="#2a1200">Ai</Adobe> },
  {
    name: "Chrome",
    active: true,
    icon: (
      <svg width="22" height="22" viewBox="0 0 22 22" aria-hidden="true">
        <circle cx="11" cy="11" r="11" fill="#fbc116" />
        <path d="M1.470 5.500A11 11 0 0 1 20.530 5.500H11l-4.760 8.250z" fill="#e33b2e" />
        <path d="M1.470 5.500A11 11 0 0 0 11 22l4.760-8.250L11 11 6.240 13.750z" fill="#2da94f" />
        <circle cx="11" cy="11" r="5.500" fill="#fff" /><circle cx="11" cy="11" r="4.300" fill="#3a7cec" />
      </svg>
    ),
  },
  {
    name: "CorelDRAW",
    icon: (
      <svg width="24" height="24" viewBox="0 0 24 24" aria-hidden="true">
        <circle cx="12" cy="12" r="12" fill="#e4e6e4" />
        <path d="M1 8.500C2.500 6 5.500 5 8 7.500l9.500 9.500 1.500 5.500c-2.500.3-5 .3-7.500-1.500L2 11.500z" fill="#5aa417" />
        <path d="M4.500 9.500l10 9.500" stroke="#f0f6e8" strokeWidth="1.800" />
        <path d="M14 1.500l1 7 2 2 2-1 1-5M17 2v8" stroke="#9a9a9a" strokeWidth="1.300" fill="none" />
      </svg>
    ),
  },
];

const Taskbar = () => (
  <Bar>
    <IconButton $w={48} $h={40} aria-label="Start">
      <svg width="16" height="16" viewBox="0 0 16 16" fill="#fff" aria-hidden="true"><path d="M0 2.200 6.500 1.300v6.300H0zM7.300 1.200 16 0v7.600H7.300zM0 8.400h6.500v6.300L0 13.800zM7.300 8.400H16V16l-8.700-1.200z" /></svg>
    </IconButton>
    <SearchBox>
      <Glyph w={16} sw={1.3}><circle cx="10.200" cy="5.800" r="5" /><path d="M6.600 9.400.5 15.500" /></Glyph>
      <input aria-label="Search" placeholder="Type here to search" />
    </SearchBox>
    <IconButton $w={48} $h={40} aria-label="Cortana"><Glyph w={16} sw={2}><circle cx="8" cy="8" r="7" /></Glyph></IconButton>
    <IconButton $w={48} $h={40} aria-label="Task view">
      <Glyph w={16} h={16} sw={1.2}><path d="M.6 0v2.500h10.800V0M.6 5.500h10.800v6H.6zM.6 16v-2.500h10.800V16M14.600 0v16" /><path d="M13 4.500h3v3h-3z" fill="#fff" stroke="none" /></Glyph>
    </IconButton>
    <Apps>
      {apps.map((a) => (
        <AppButton key={a.name} $w={49} $h={40} $active={a.active} aria-label={a.name}>{a.icon}</AppButton>
      ))}
    </Apps>
    <Tray>
      <Weather>
        <Glyph w={24} h={16} sw={1.4}><path d="M.7.700h20v14.600H2.500A1.800 1.800 0 0 1 .7 13.500zM20.700 4h2.600v9.500a1.800 1.800 0 0 1-2.600 1.600M3.500 4h14.500M11.500 7h6.500M11.500 9.500h6.500M11.500 12h6.500M4 7.200h5v4.600H4z" /></Glyph>
        27°C
      </Weather>
      <IconButton $w={24} $h={40} aria-label="Show hidden icons"><Glyph w={12} h={7} sw={1.3}><path d="M.5 6.500l5.500-5.500 5.500 5.500" /></Glyph></IconButton>
      <IconButton $w={24} $h={40} aria-label="Meet now"><Glyph w={12} h={16} sw={1.1}><path d="M1 4.500h7.200v7H1zM8.200 7l3-1.700v5.400l-3-1.700M2 2c2-1.600 5.500-1.600 7.500 0M2 14c2 1.600 5.500 1.600 7.500 0" /></Glyph></IconButton>
      <IconButton $w={24} $h={40} aria-label="Battery"><Glyph w={16} h={12} sw={1.1}><path d="M5.500 3.500h9v7H4.500V8M14.500 5.500h1.200v3h-1.200M1.500 0v2.500M4 0v2.500M.5 2.500H5v1.500a2 2 0 0 1-4 0zM2.700 6v4h2" /><path d="M5 5.500h4.500v3.500H5z" fill="#fff" stroke="none" /></Glyph></IconButton>
      <IconButton $w={24} $h={40} aria-label="Network"><Glyph w={16} sw={1.1}><path d="M9 15A7 7 0 1 1 15 8.500M1 8h9M2 4.200h12M2 11.800h6.500M8 1C4 4.500 4 11.500 8 15M8 1c2 2 3 4.300 3 7" /><circle cx="12.500" cy="12.500" r="3" /><path d="M10.500 10.500l4 4" /></Glyph></IconButton>
      <IconButton $w={24} $h={40} aria-label="Volume"><Glyph w={16} h={12} sw={1.1}><path d="M.5 4h2.500l3-3v10l-3-3H.5zM8 4c1 1.200 1 2.800 0 4M10.200 2.300c1.800 2.200 1.800 5.200 0 7.400" /><path d="M12.500.5c2.800 3.300 2.800 7.700 0 11" stroke="#888" /></Glyph></IconButton>
      <Clock>3:11 PM<br />7/3/2022</Clock>
      <IconButton $w={40} $h={40} aria-label="Notifications"><Glyph w={16} h={16} sw={1.2}><path d="M.6.600h14.800v11.500H10L7.500 15 7.500 12.100H.6z" /></Glyph></IconButton>
      <ShowDesktop />
    </Tray>
  </Bar>
);

export default function App() {
  return (
    <Desktop>
      <GlobalStyle />
      <BrowserWindow>
        <BrowserChrome />
        <EditorToolbar />
        <Workspace>
          <LayersPanel />
          <Canvas />
          <DesignPanel />
        </Workspace>
      </BrowserWindow>
      <Taskbar />
    </Desktop>
  );
}
